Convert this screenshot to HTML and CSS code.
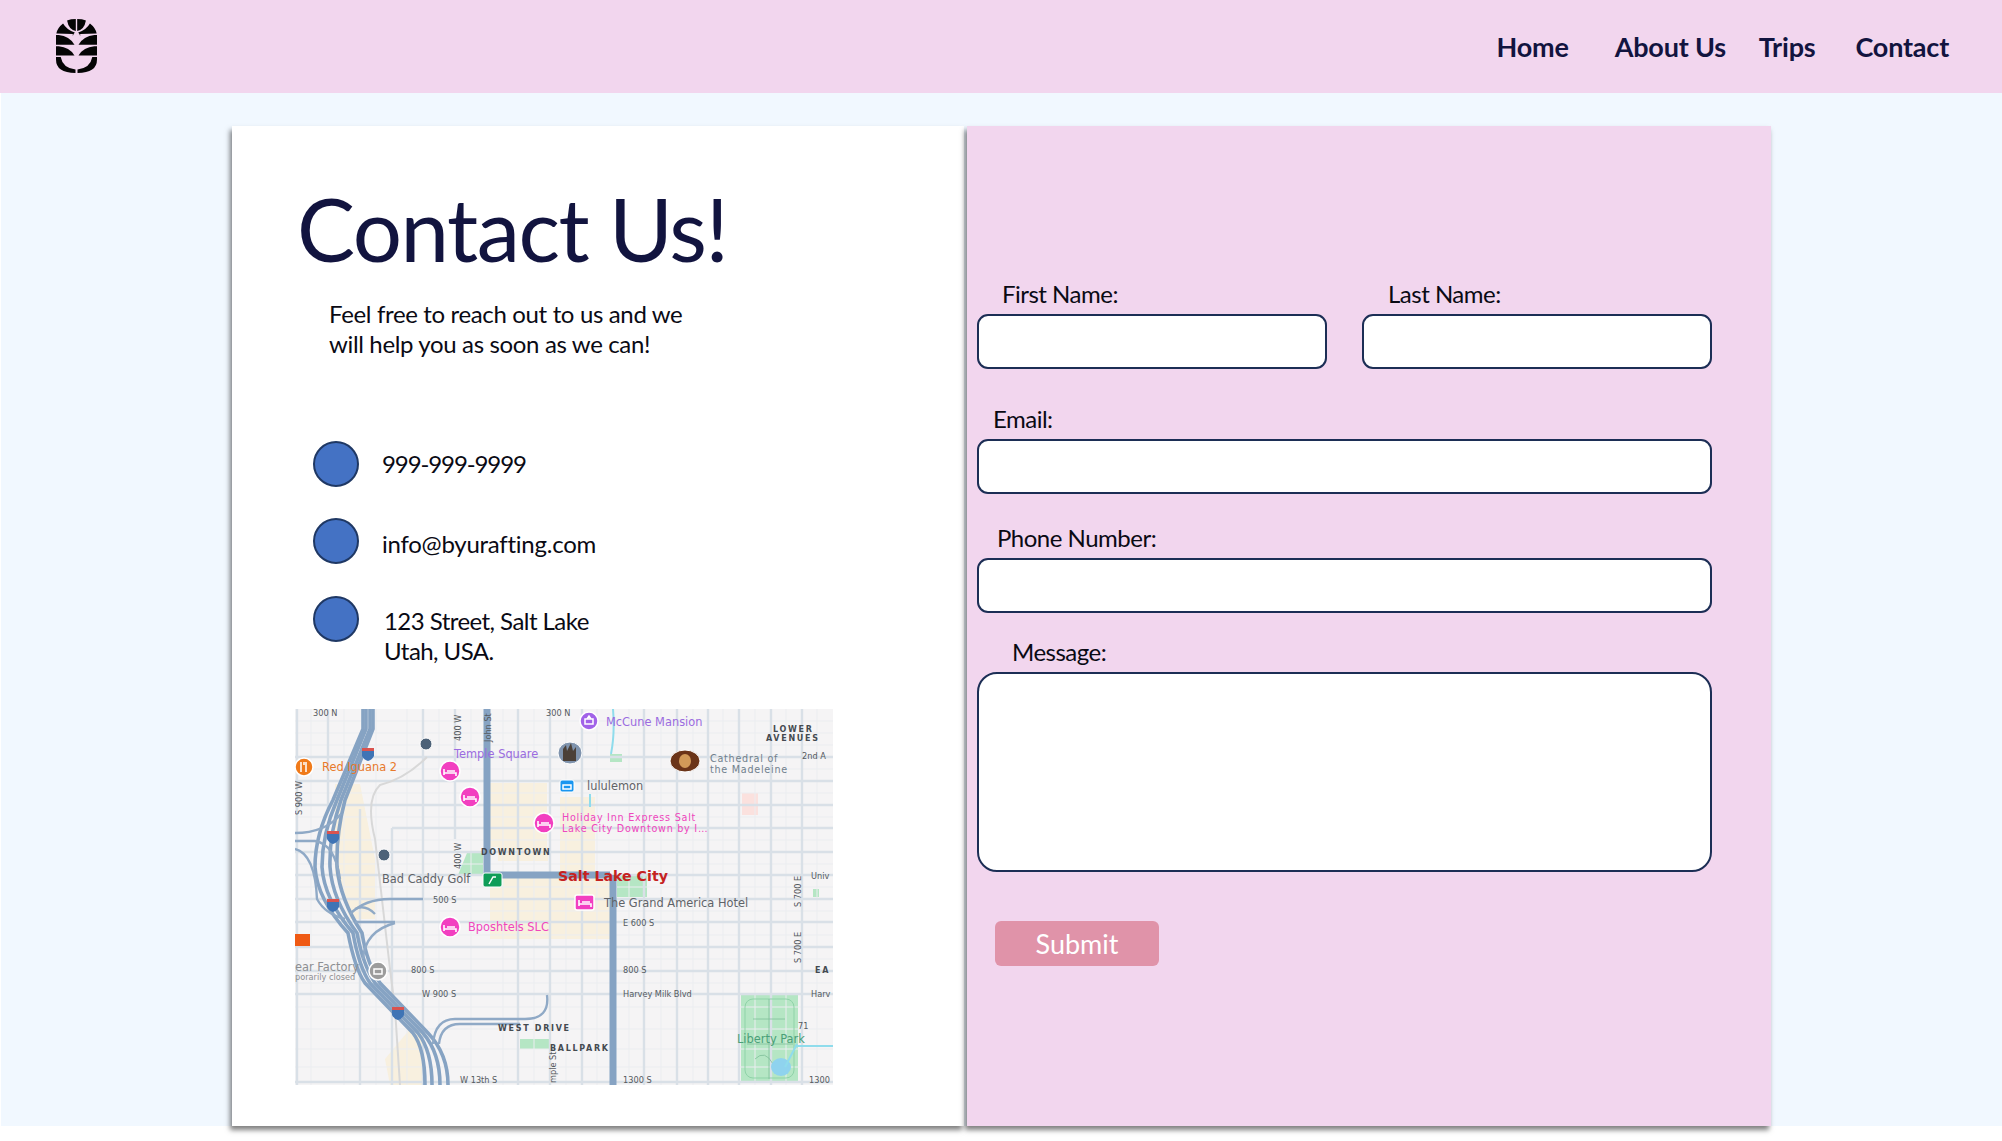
FILE: index.html
```html
<!DOCTYPE html>
<html lang="en">
<head>
<meta charset="utf-8">
<title>Contact Us</title>
<link rel="stylesheet" href="styles.css">
</head>
<body>
<header class="topbar">
  <svg class="logo" viewBox="0 0 122 160" aria-label="Logo">
    <g>
      <path d="M33 4Q44 0 59 0V35Q38 32 33 4Z"/>
      <path d="M1 43Q4 26 21 13Q32 32 56 40Q52 44 50 50V44Z"/>
      <path d="M0 47H8Q40 50 55 76H0Z"/>
      <path d="M0 81H8Q40 84 55 108H0Z"/>
      <path d="M0 113H14Q20 146 58 150V160Q0 160 0 120Z"/>
    </g>
    <g transform="translate(122 0) scale(-1 1)">
      <path d="M33 4Q44 0 59 0V35Q38 32 33 4Z"/>
      <path d="M1 43Q4 26 21 13Q32 32 56 40Q52 44 50 50V44Z"/>
      <path d="M0 47H8Q40 50 55 76H0Z"/>
      <path d="M0 81H8Q40 84 55 108H0Z"/>
      <path d="M0 113H14Q20 146 58 150V160Q0 160 0 120Z"/>
    </g>
  </svg>
  <nav class="nav">
    <a class="nav-link nav-home" href="#">Home</a>
    <a class="nav-link nav-about" href="#">About Us</a>
    <a class="nav-link nav-trips" href="#">Trips</a>
    <a class="nav-link" href="#">Contact</a>
  </nav>
</header>

<div class="page">
<main class="card">
  <section class="info">
    <h1 class="title">Contact Us!</h1>
    <p class="intro">Feel free to reach out to us and we<br>will help you as soon as we can!</p>
    <ul class="contacts">
      <li class="contact contact-phone"><span class="dot"></span><span class="contact-text">999-999-9999</span></li>
      <li class="contact contact-mail"><span class="dot"></span><span class="contact-text">info@byurafting.com</span></li>
      <li class="contact contact-addr"><span class="dot"></span><span class="contact-text">123 Street, Salt Lake<br>Utah, USA.</span></li>
    </ul>
    <svg class="map" viewBox="0 0 538 376">
      <rect class="m-bg" width="538" height="376"/>
      <g class="m-tan">
        <rect x="195" y="74" width="57" height="64"/>
        <rect x="203" y="138" width="50" height="14"/>
        <rect x="195" y="166" width="120" height="64"/>
        <rect x="265" y="88" width="35" height="78"/>
        <path d="M40 75H65L80 150V210H55L40 165Z"/>
        <path d="M90 350L115 320H128V376H95Z"/>
      </g>
      <rect class="m-blush" x="447" y="84" width="16" height="22"/>
      <g class="m-green">
        <path d="M163 166L172 144H188V166Z"/>
        <rect x="322" y="166" width="30" height="22"/>
        <rect x="225" y="330" width="30" height="10"/>
        <rect x="446" y="286" width="57" height="87"/>
        <rect x="315" y="45" width="12" height="8"/>
        <rect x="518" y="180" width="6" height="8"/>
      </g>
      <path class="m-minor" d="M16 0V376M49 0V376M81 0V376M112 0V376M144 0V376M176 0V376M208 0V376M239 0V376M271 0V376M302 0V376M334 0V376M366 0V376M398 0V376M428 0V376M460 0V376M491 0V376M522 0V376M0 12H538M0 24H538M0 36H538M0 60H538M0 84H538M0 108H538M0 131H538M0 155H538M0 178H538M0 202H538M0 226H538M0 250H538M0 274H538M0 298H538M0 320H538M0 340H538M0 358H538"/>
      <path class="m-road" d="M0 48H538M0 72H538M0 96H538M97 119H538M0 143H538M0 166H538M0 190H538M0 213H538M0 238H538M0 262H538M0 285H538M0 373H538M2 0V376M33 0V100M65 100V376M97 119V376M128 0V376M160 0V130M223 0V376M255 0V376M287 0V376M349 0V376M382 0V376M413 0V376M444 0V376M476 0V376M507 0V376"/>
      <path class="m-rail" d="M132 48Q110 70 85 76Q70 90 80 130L95 260L100 300L105 376"/>
      <rect class="m-park" x="450" y="290" width="49" height="79" rx="8"/>
      <path class="m-parkline" d="M458 310H490M474 290V370M452 335H498M460 350Q470 340 478 355"/>
      <ellipse class="m-lake" cx="486" cy="358" rx="10" ry="9"/>
      <path class="m-river" d="M318 0Q320 25 316 45M295 85V98M500 337H538M490 358L502 335"/>
      <g class="m-major">
        <path d="M192 0V166H315M318 166V376"/>
      </g>
      <g class="m-highway">
        <path d="M68 0V20L38 91Q20 125 20 158Q22 190 53 224Q60 260 70 274L118 324Q130 340 130 376"/>
        <path d="M71 0V20L42 91Q27 125 27 158Q29 190 58 224Q64 258 75 274L123 324Q137 342 137 376"/>
        <path d="M75 0V20L46 91Q34 125 35 158Q37 190 62 224Q68 256 80 274L128 324Q145 344 145 376"/>
        <path d="M78 0V20L50 91Q41 125 42 158Q45 190 67 224Q72 255 85 274L133 324Q153 345 153 376"/>
      </g>
      <g class="m-ramp">
        <path d="M0 124Q30 124 46 105"/>
        <path d="M0 132H20Q40 135 45 170"/>
        <path d="M0 140Q20 145 22 190Q30 205 50 210"/>
        <path d="M128 190H95Q70 190 55 205"/>
        <path d="M60 213H100"/>
        <path d="M68 250Q70 222 100 214"/>
        <path d="M60 200Q70 195 80 205"/>
        <path d="M138 335Q140 310 160 310H230Q255 310 252 286"/>
        <path d="M144 335Q146 315 165 315H225"/>
      </g>
      <g class="m-shields">
        <g transform="translate(73 45)"><rect class="sh-top" x="-6" y="-6" width="12" height="3"/><path class="sh-body" d="M-6 -3H6V2Q4 6 0 7Q-4 6 -6 2Z"/></g>
        <g transform="translate(38 128)"><rect class="sh-top" x="-6" y="-6" width="12" height="3"/><path class="sh-body" d="M-6 -3H6V2Q4 6 0 7Q-4 6 -6 2Z"/></g>
        <g transform="translate(38 196)"><rect class="sh-top" x="-6" y="-6" width="12" height="3"/><path class="sh-body" d="M-6 -3H6V2Q4 6 0 7Q-4 6 -6 2Z"/></g>
        <g transform="translate(103 304)"><rect class="sh-top" x="-6" y="-6" width="12" height="3"/><path class="sh-body" d="M-6 -3H6V2Q4 6 0 7Q-4 6 -6 2Z"/></g>
      </g>
      <g class="m-pins-hotel">
        <circle cx="155" cy="62" r="10"/><circle cx="175" cy="88" r="10"/><circle cx="249" cy="114" r="10"/><circle cx="155" cy="218" r="10"/>
        <rect x="280" y="186" width="19" height="15" rx="2"/>
      </g>
      <path class="m-bed" d="M149 60V66M149 64H161V67M152 62H160M169 86V92M169 90H181V93M172 88H180M243 112V118M243 116H255V119M246 114H254M149 216V222M149 220H161V223M152 218H160M284 191V197M284 195H296V198M287 193H295"/>
      <circle class="m-pin-orange" cx="9" cy="58" r="9"/>
      <path class="m-glyph" d="M6 53V63M11 53V63M9 53V56"/>
      <circle class="m-pin-purple" cx="294" cy="12" r="9"/>
      <path class="m-glyph" d="M290 15V10H298V15ZM292 10L294 7L296 10"/>
      <circle class="m-pin-grey" cx="83" cy="262" r="9"/>
      <path class="m-glyph" d="M79 265V260H87V265Z"/>
      <circle class="m-transit" cx="131" cy="35" r="6"/><circle class="m-transit" cx="89" cy="146" r="6"/>
      <rect class="m-orange" x="0" y="225" width="15" height="12"/>
      <rect class="m-blue" x="265" y="71" width="14" height="12" rx="2"/>
      <path class="m-glyph" d="M268 80V76H276V80Z"/>
      <rect class="m-golf" x="188" y="164" width="19" height="14" rx="2"/>
      <path class="m-glyph" d="M194 175L198 168H201"/>
      <ellipse class="m-temple" cx="275" cy="44" rx="12" ry="11"/>
      <path class="m-temple-top" d="M268 52V40L271 36L272 42L276 34L278 42L281 38V52Z"/>
      <ellipse class="m-cathedral" cx="390" cy="52" rx="15" ry="11"/>
      <ellipse class="m-cathedral-in" cx="390" cy="52" rx="6" ry="7"/>

      <g class="m-t">
        <text class="t-sm" x="18" y="7">300 N</text>
        <text class="t-sm" x="251" y="7">300 N</text>
        <text class="t-label t-orange" x="27" y="62">Red Iguana 2</text>
        <text class="t-label t-purple" x="159" y="49">Temple Square</text>
        <text class="t-label t-purple" x="311" y="17">McCune Mansion</text>
        <text class="t-area" x="186" y="146">DOWNTOWN</text>
        <text class="t-label t-grey" x="87" y="174">Bad Caddy Golf</text>
        <text class="t-sm" x="138" y="194">500 S</text>
        <text class="t-label t-pink" x="173" y="222">Bposhtels SLC</text>
        <text class="t-label t-faint" x="0" y="262">ear Factory</text>
        <text class="t-sm t-faint" x="0" y="271">porarily closed</text>
        <text class="t-sm" x="116" y="264">800 S</text>
        <text class="t-sm" x="127" y="288">W 900 S</text>
        <text class="t-area" x="203" y="322">WEST DRIVE</text>
        <text class="t-area" x="255" y="342">BALLPARK</text>
        <text class="t-sm" x="165" y="374">W 13th S</text>
        <text class="t-area" x="478" y="23">LOWER</text>
        <text class="t-area" x="471" y="32">AVENUES</text>
        <text class="t-sm" x="507" y="50">2nd A</text>
        <text class="t-tight t-slate" x="415" y="53">Cathedral of</text>
        <text class="t-tight t-slate" x="415" y="64">the Madeleine</text>
        <text class="t-label t-grey" x="292" y="81">lululemon</text>
        <text class="t-tight t-pink" x="267" y="112">Holiday Inn Express Salt</text>
        <text class="t-tight t-pink" x="267" y="123">Lake City Downtown by I…</text>
        <text class="t-city" x="263" y="172">Salt Lake City</text>
        <text class="t-label t-grey" x="309" y="198">The Grand America Hotel</text>
        <text class="t-sm" x="328" y="217">E 600 S</text>
        <text class="t-sm" x="328" y="264">800 S</text>
        <text class="t-sm" x="328" y="288">Harvey Milk Blvd</text>
        <text class="t-label t-green" x="442" y="334">Liberty Park</text>
        <text class="t-sm" x="328" y="374">1300 S</text>
        <text class="t-sm" x="516" y="170">Univ</text>
        <text class="t-area" x="520" y="264">EA</text>
        <text class="t-sm" x="516" y="288">Harv</text>
        <text class="t-sm" x="514" y="374">1300</text>
        <text class="t-sm" x="503" y="320">71</text>
        <text class="t-sm" transform="translate(166 32) rotate(-90)">400 W</text>
        <text class="t-sm" transform="translate(166 160) rotate(-90)">400 W</text>
        <text class="t-sm" transform="translate(196 33) rotate(-90)">John St</text>
        <text class="t-sm" transform="translate(7 106) rotate(-90)">S 900 W</text>
        <text class="t-sm" transform="translate(261 374) rotate(-90)">mple St</text>
        <text class="t-sm" transform="translate(506 198) rotate(-90)">S 700 E</text>
        <text class="t-sm" transform="translate(506 254) rotate(-90)">S 700 E</text>
      </g>
    </svg>
  </section>

  <form class="form">
    <div class="row">
      <div class="field field-first">
        <label class="label label-first" for="first">First Name:</label>
        <input class="input" id="first" type="text">
      </div>
      <div class="field field-last">
        <label class="label label-last" for="last">Last Name:</label>
        <input class="input" id="last" type="text">
      </div>
    </div>
    <div class="field field-email">
      <label class="label label-email" for="email">Email:</label>
      <input class="input" id="email" type="text">
    </div>
    <div class="field field-phone">
      <label class="label label-phone" for="phone">Phone Number:</label>
      <input class="input" id="phone" type="text">
    </div>
    <div class="field field-message">
      <label class="label label-message" for="message">Message:</label>
      <textarea class="input textarea" id="message"></textarea>
    </div>
    <button class="submit" type="button">Submit</button>
  </form>
</main>
</div>
</body>
</html>
```

FILE: styles.css
```css
* { box-sizing: border-box; }
html, body { margin: 0; padding: 0; }
body {
  height: 1141px;
  overflow: hidden;
  background: #fff;
  font-family: "Lato", "Noto Sans", sans-serif;
  color: #0a0a14;
}

/* top bar */
.topbar {
  height: 93px;
  background: #f2d6ee;
  display: flex;
  align-items: center;
  justify-content: space-between;
  padding: 0 53px 0 56px;
}
.logo { width: 41px; height: 54px; fill: #050505; display: block; margin-top: -1px; }
.nav { display: flex; align-items: center; }
.nav-link {
  font-size: 27px;
  font-weight: 700;
  color: #12143f;
  text-decoration: none;
  letter-spacing: -0.2px;
}
.nav-home { margin-right: 46px; }
.nav-about { margin-right: 33px; }
.nav-trips { margin-right: 40px; }

/* page background stops level with the card's bottom edge */
.page {
  height: 1033px;
  margin-left: 1px;
  padding: 33px 0 0 231px;
  background: #f1f8ff;
}

/* card */
.card {
  display: flex;
  width: 1539px;
  height: 1000px;
}
.info {
  width: 732px;
  background: #fff;
  box-shadow: -2px 4px 5px rgba(0, 0, 0, .5);
  padding: 0 0 0 63px;
  margin-right: 3px;
}
.title {
  margin: 48px 0 0 2px;
  font-size: 87px;
  line-height: 110px;
  font-weight: 400;
  color: #12143f;
  letter-spacing: -1.5px;
}
.intro {
  margin: 14.5px 0 0 34px;
  font-size: 24px;
  line-height: 30.5px;
  color: #0a0a14;
  letter-spacing: -.35px;
}
.contacts { list-style: none; margin: 0; padding: 0 0 0 18px; }
.contact { display: flex; font-size: 24px; line-height: 30px; letter-spacing: -.25px; }
.contact-phone { margin-top: 81.5px; align-items: center; letter-spacing: -1.1px; }
.contact-mail { margin-top: 31px; align-items: center; }
.contact-addr { margin-top: 32px; align-items: flex-start; letter-spacing: -.55px; }
.dot {
  width: 46px;
  height: 46px;
  border-radius: 50%;
  background: #4472c4;
  border: 2px solid #1f3864;
  flex: none;
  margin-right: 23px;
}
.contact-mail .contact-text { margin-top: 5px; }
.contact-addr .contact-text { margin: 10px 0 0 2px; }
.map { display: block; width: 538px; height: 376px; margin-top: 43px; }

/* map */
.m-bg { fill: #f5f4f5; }
.m-tan { fill: #f8f0df; }
.m-blush { fill: #fbe1de; }
.m-green { fill: #b5e6c4; }
.m-minor { stroke: #ebedf0; stroke-width: 1; fill: none; }
.m-road { stroke: #d9e0e7; stroke-width: 2.4; fill: none; }
.m-rail { stroke: #d8d8d8; stroke-width: 2; fill: none; }
.m-park { fill: none; stroke: #8fd3a8; stroke-width: 1; }
.m-parkline { fill: none; stroke: #7fbf99; stroke-width: .8; }
.m-lake { fill: #8fd3ee; }
.m-river { fill: none; stroke: #8fdcec; stroke-width: 2; }
.m-major path { stroke: #86a3c3; stroke-width: 7; fill: none; }
.m-highway path { stroke: #86a3c3; stroke-width: 3.6; fill: none; }
.m-ramp path { stroke: #8fa9c6; stroke-width: 2.4; fill: none; }
.sh-top { fill: #d9534f; }
.sh-body { fill: #3f74b5; }
.m-pins-hotel { fill: #f23fc0; stroke: #fff; stroke-width: 1.5; }
.m-bed { stroke: #fff; stroke-width: 1.6; fill: none; }
.m-pin-orange { fill: #f07a1a; stroke: #fff; stroke-width: 1.5; }
.m-pin-purple { fill: #a163e8; stroke: #fff; stroke-width: 1.5; }
.m-pin-grey { fill: #9c9c9c; stroke: #fff; stroke-width: 1.5; }
.m-glyph { stroke: #fff; stroke-width: 1.5; fill: none; }
.m-transit { fill: #4d6278; stroke: #fff; stroke-width: 1; }
.m-orange { fill: #ef5a14; }
.m-blue { fill: #1a96f0; stroke: #fff; stroke-width: 1; }
.m-golf { fill: #0f9d58; stroke: #fff; stroke-width: 1; }
.m-temple { fill: #7f93ad; stroke: #fff; stroke-width: 1; }
.m-temple-top { fill: #4b4038; }
.m-cathedral { fill: #6b3418; stroke: #fff; stroke-width: 1; }
.m-cathedral-in { fill: #d29a58; }
.m-t text { font-family: "DejaVu Sans", sans-serif; }
.t-sm { font-size: 8.2px; fill: #555a60; }
.t-label { font-size: 11.4px; }
.t-tight { font-size: 9.6px; letter-spacing: .75px; }
.t-area { font-size: 8px; font-weight: 700; letter-spacing: 1.7px; fill: #444a50; }
.t-city { font-size: 14.2px; font-weight: 700; fill: #c5221f; }
.t-orange { fill: #e8792b; }
.t-purple { fill: #9b6ce0; }
.t-grey { fill: #5f6368; }
.t-pink { fill: #ef46bd; }
.t-faint { fill: #8d8f92; }
.t-slate { fill: #70808c; }
.t-green { fill: #4b9f78; }

/* form */
.form {
  width: 804px;
  background: #f2d6ee;
  box-shadow: -2px 4px 5px rgba(0, 0, 0, .5);
  padding: 153px 0 0 10px;
}
.row { display: flex; gap: 35px; width: 735px; }
.row .field { width: 350px; }
.field { display: flex; flex-direction: column; width: 735px; }
.field-email { margin-top: 35px; }
.field-phone { margin-top: 29px; }
.field-message { margin-top: 24px; }
.label {
  font-size: 24px;
  line-height: 30px;
  margin-bottom: 5px;
  color: #0a0a14;
  letter-spacing: -.5px;
}
.label-first { margin-left: 25px; }
.label-last { margin-left: 26px; }
.label-email { margin-left: 16px; }
.label-phone { margin-left: 20px; }
.label-message { margin-left: 35px; }
.input {
  display: block;
  width: 100%;
  height: 55px;
  background: #fff;
  border: 2px solid #1c2e55;
  border-radius: 11px;
  outline: none;
  padding: 0;
}
.textarea { height: 200px; border-radius: 20px; resize: none; }
.submit {
  display: block;
  margin: 49px 0 0 18px;
  width: 164px;
  height: 45px;
  padding: 0;
  background: #e093a9;
  border: none;
  border-radius: 6px;
  color: #fff;
  font-family: inherit;
  font-size: 27px;
  line-height: 45px;
}
```
